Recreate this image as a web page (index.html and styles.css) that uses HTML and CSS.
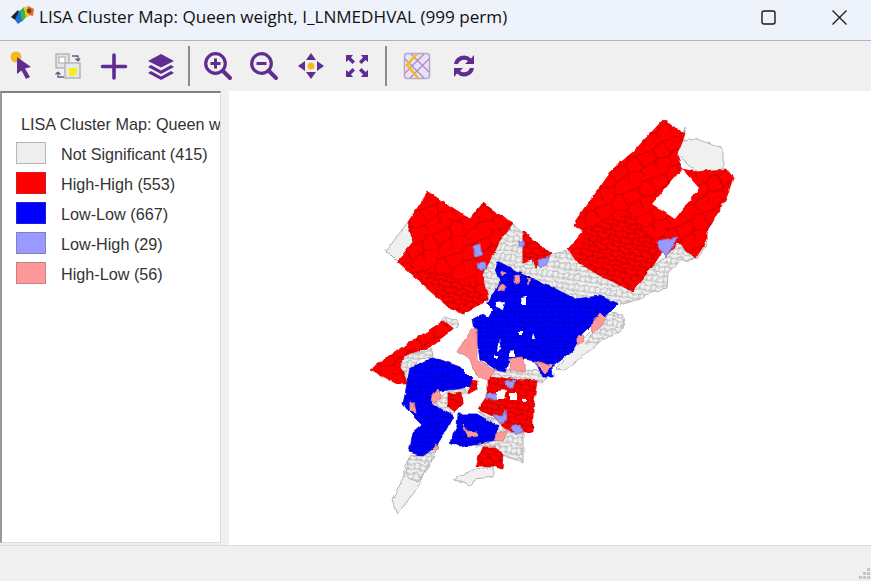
FILE: index.html
```html
<!DOCTYPE html>
<html lang="en">
<head>
    <meta charset="UTF-8">
    <meta name="viewport" content="width=device-width, initial-scale=1.0">
    <title>LISA Cluster Map</title>
    <link rel="stylesheet" href="styles.css">
</head>
<body>
    <div class="titlebar">
        <svg class="app-icon" viewBox="0 0 24 20">
            <path d="M1 12 L8 5 L10 9 L5 15Z" fill="#222"/>
            <path d="M5 15 L9 6 L13 4 L12 16 L8 19Z" fill="#1e6fe0"/>
            <path d="M10 6 L14 2 L16 12 L12 17Z" fill="#2fb84a"/>
            <path d="M14 2 L19 1 L20 10 L16 13Z" fill="#f2c21a"/>
            <path d="M18 1 L24 4 L23 11 L19 10Z" fill="#e8682a"/>
            <circle cx="19" cy="6" r="2.4" fill="#7a3a1a"/>
        </svg>
        <span class="title-text">LISA Cluster Map: Queen weight, I_LNMEDHVAL (999 perm)</span>
        <div class="win-controls">
            <svg viewBox="0 0 15 15" class="win-btn"><rect x="1" y="1" width="13" height="13" rx="2" fill="none" stroke="#1a1a1a" stroke-width="1.4"/></svg>
            <svg viewBox="0 0 15 15" class="win-btn"><path d="M.5 .5L14.5 14.5M14.5 .5L.5 14.5" stroke="#1a1a1a" stroke-width="1.3"/></svg>
        </div>
    </div>

    <div class="toolbar">
        <div class="tools">
            <svg class="tool" viewBox="0 0 30 30">
                <circle cx="10" cy="6" r="5.5" fill="#f5b921"/>
                <path d="M11 6 L25 16 L19 17.5 L24 26 L20 28 L15.5 19.5 L11 23Z" fill="#5f2d91"/>
            </svg>
            <svg class="tool" viewBox="0 0 30 30">
                <rect x="3" y="3" width="13" height="14" fill="#e4e4e4" stroke="#b5b5b5" stroke-width="1.5"/>
                <rect x="6" y="6" width="6" height="6" fill="#fff" stroke="#aaa"/>
                <rect x="12" y="12" width="15" height="15" fill="#e8e8e8" stroke="#b5b5b5" stroke-width="1.5"/>
                <path d="M16 17 H24 V22 L20 25 H16Z" fill="#f4ee1e"/>
                <path d="M19 5 H25 V10 M25 10 L22.5 7.5 M25 10 L27 7.5" fill="none" stroke="#6a5a80" stroke-width="1.3"/>
                <path d="M11 26 H5 V21 M5 21 L2.500 23.500 M5 21 L7.500 23.500" fill="none" stroke="#6a5a80" stroke-width="1.3"/>
            </svg>
            <svg class="tool" viewBox="0 0 30 30">
                <path d="M15 4 V27 M3.500 15.500 H26.500" stroke="#5f2d91" stroke-width="3.6" stroke-linecap="round"/>
            </svg>
            <svg class="tool" viewBox="0 0 30 30">
                <path d="M15 3 L28 10 L15 16.500 L2 10Z" fill="#5f2d91"/>
                <path d="M5 14 L2 16 L15 23 L28 16 L25 14 L15 19.500Z" fill="#5f2d91"/>
                <path d="M5 20 L2 22 L15 29 L28 22 L25 20 L15 25.500Z" fill="#5f2d91"/>
            </svg>
        </div>
        <div class="sep"></div>
        <div class="tools">
            <svg class="tool" viewBox="0 0 30 30">
                <circle cx="12.500" cy="12.500" r="9.800" fill="none" stroke="#5f2d91" stroke-width="3.200"/>
                <path d="M7.500 12.500 H17.500 M12.500 7.500 V17.500" stroke="#5f2d91" stroke-width="3"/>
                <path d="M20 20 L27 27" stroke="#5f2d91" stroke-width="4" stroke-linecap="round"/>
            </svg>
            <svg class="tool" viewBox="0 0 30 30">
                <circle cx="12.500" cy="12.500" r="9.800" fill="none" stroke="#5f2d91" stroke-width="3.200"/>
                <path d="M7.500 12.500 H17.500" stroke="#5f2d91" stroke-width="3"/>
                <path d="M20 20 L27 27" stroke="#5f2d91" stroke-width="4" stroke-linecap="round"/>
            </svg>
            <svg class="tool" viewBox="0 0 30 30">
                <path d="M15 2 L20 9 H10Z M15 28 L20 21 H10Z M2 15 L9 10 V20Z M28 15 L21 10 V20Z" fill="#5f2d91"/>
                <circle cx="15" cy="15" r="3.500" fill="#f5b921"/>
            </svg>
            <svg class="tool" viewBox="0 0 30 30">
                <path d="M4 4 H11 L9 6.500 L13 10.500 L10.500 13 L6.500 9 L4 11Z" fill="#5f2d91"/>
                <path d="M26 4 H19 L21 6.500 L17 10.500 L19.500 13 L23.500 9 L26 11Z" fill="#5f2d91"/>
                <path d="M4 26 H11 L9 23.500 L13 19.500 L10.500 17 L6.500 21 L4 19Z" fill="#5f2d91"/>
                <path d="M26 26 H19 L21 23.500 L17 19.500 L19.500 17 L23.500 21 L26 19Z" fill="#5f2d91"/>
            </svg>
        </div>
        <div class="sep sep-last"></div>
        <div class="tools">
            <svg class="tool" viewBox="0 0 30 30">
                <rect x="2.500" y="2.500" width="25" height="25" rx="3" fill="#e9e2f2" stroke="#b9a4d2" stroke-width="1.500"/>
                <path d="M3 22 L22 3 M8 27 L27 8 M3 8 L22 27 M9 3 L27 21" stroke="#a88cc8" stroke-width="1.300"/>
                <path d="M15 3 L5 14 L16 27" fill="none" stroke="#f5b921" stroke-width="2.600"/>
            </svg>
            <svg class="tool" viewBox="0 0 30 30">
                <path d="M5 13 A10 10 0 0 1 22 7.500 L25 4 V13 H16 L19 10 A6.500 6.500 0 0 0 9 13Z" fill="#5f2d91"/>
                <path d="M25 17 A10 10 0 0 1 8 22.500 L5 26 V17 H14 L11 20 A6.500 6.500 0 0 0 21 17Z" fill="#5f2d91"/>
            </svg>
        </div>
    </div>

    <div class="main">
        <div class="legend">
            <div class="legend-title">LISA Cluster Map: Queen w</div>
            <div class="legend-row"><span class="swatch ns"></span>Not Significant (415)</div>
            <div class="legend-row"><span class="swatch hh"></span>High-High (553)</div>
            <div class="legend-row"><span class="swatch ll"></span>Low-Low (667)</div>
            <div class="legend-row"><span class="swatch lh"></span>Low-High (29)</div>
            <div class="legend-row"><span class="swatch hl"></span>High-Low (56)</div>
        </div>
        <div class="canvas">
            <svg class="map" viewBox="229 92 642 453">
                <defs>
                    <pattern id="redBig" width="31" height="27" patternUnits="userSpaceOnUse" patternTransform="rotate(-28)">
                        <rect width="31" height="27" fill="#ff0000"/>
                        <path d="M0 6 L10 8 L17 4 L31 7 M0 19 L8 17 L20 21 L31 18 M10 8 L8 17 M20 21 L22 27 M17 4 L15 0 M23 6 L24 19 M6 18 L4 27" fill="none" stroke="#b30000" stroke-width=".8"/>
                    </pattern>
                    <pattern id="redFine" width="12" height="10" patternUnits="userSpaceOnUse" patternTransform="rotate(12)">
                        <rect width="12" height="10" fill="#ff0000"/>
                        <path d="M0 3 L6 4 L12 2 M0 8 L5 9 L12 7 M3 0 L3 4 M8 3 L9 8 M3 8 L3 10 M10 7 L10 10" fill="none" stroke="#b00000" stroke-width=".8"/>
                    </pattern>
                    <pattern id="blue" width="11" height="10" patternUnits="userSpaceOnUse">
                        <rect width="11" height="10" fill="#0000ff"/>
                        <path d="M0 3 L6 2 L11 4 M0 8 L5 8 L11 9 M3 2 L3 8 M8 3 L8 9" fill="none" stroke="#0000b0" stroke-width=".8"/>
                    </pattern>
                    <pattern id="gray" width="11" height="10" patternUnits="userSpaceOnUse" patternTransform="rotate(8)">
                        <rect width="11" height="10" fill="#f0f0f0"/>
                        <path d="M0 3 L6 2 L11 4 M0 8 L5 8 L11 9 M3 2 L3 8 M8 3 L8 9 M3 8 L3 10 M6 0 L6 2" fill="none" stroke="#b4b4b4" stroke-width="1"/>
                    </pattern>
                    <filter id="rough" x="-5%" y="-5%" width="110%" height="110%">
                        <feTurbulence type="fractalNoise" baseFrequency=".13" numOctaves="2" seed="4"/>
                        <feDisplacementMap in="SourceGraphic" scale="4" xChannelSelector="R" yChannelSelector="G"/>
                    </filter>
                </defs>
                <g filter="url(#rough)">
                    <!-- not significant, large plain tracts -->
                    <g class="ns-plain">
                        <polygon points="408,223 386,252 397,263 413,243"/>
                        <polygon points="685,128 683,142 697,140 715,147 723,148 723,170 703,172 697,173 677,155"/>
                        <polygon points="620,315 610,313 580,343 573,352 555,370 565,371 600,343 622,320"/>
                        <polygon points="410,457 435,453 430,467 420,480 417,490 397,515 392,500 403,480 405,467"/>
                        <polygon points="493,468 475,470 453,480 470,487 475,480 493,478"/>
                        <polygon points="678,245 697,260 707,245 690,250 668,270 655,270"/>
                    </g>
                    <!-- not significant, dense tracts -->
                    <g class="ns-dense">
                        <polygon points="513,225 523,233 523,263 532,260 535,269 552,255 567,252 577,263 593,273 632,292 653,267 663,260 678,245 697,260 680,262 668,275 667,290 650,293 640,300 617,307 600,297 575,300 550,287 533,280 517,273 507,267 497,262 495,270 500,283 495,292 487,305 480,277 498,245"/>
                        <polygon points="445,318 458,322 457,328 447,332 440,326"/>
                        <polygon points="432,350 403,357 400,368 408,385 412,370 420,360 433,358"/>
                        <polygon points="477,412 503,425 523,435 523,463 503,457 493,447 475,447 497,440 498,427"/>
                        <polygon points="437,398 462,388 468,387 470,393 462,395 463,405 455,413 448,417 440,410 433,402"/>
                        <polygon points="493,370 552,372 543,383 487,383"/>
                        <polygon points="610,313 622,315 625,328 600,343 585,345"/>
                        <polygon points="410,457 435,453 428,468 417,482 405,478"/>
                    </g>
                    <g class="hh-big">
                        <polygon points="428,193 470,220 483,204 513,225 498,245 482,277 488,300 463,315 447,307 397,263 413,243 408,223"/>
                        <polygon points="663,121 685,135 677,155 682,170 697,173 703,172 727,170 733,179 727,197 707,233 707,242 695,260 678,243 665,258 657,243 662,253 653,267 632,292 593,273 577,263 568,250 583,233 574,225 613,170 633,153"/>
                        <polygon points="370,370 443,322 453,330 430,348 403,357 400,368 408,385 397,385"/>
                    </g>
                    <g class="hh-fine">
                        <polygon points="523,233 552,255 535,269 532,260 523,263"/>
                        <polygon points="487,378 537,382 533,410 533,433 510,433 492,417 478,410 487,397"/>
                        <polygon points="483,448 497,448 503,457 502,470 493,467 475,467"/>
                        <polygon points="448,395 462,393 463,405 455,413 448,407"/>
                        <polygon points="470,381 477,382 477,390 468,395 469,390"/>
                        <polygon class="inner" points="587,230 630,213 657,243 653,267 632,292 593,273 577,260"/>
                        <polygon class="inner" points="420,270 470,283 487,300 463,315 447,307"/>
                    </g>
                    <g class="ll">
                        <polygon points="497,262 507,267 517,273 533,280 550,287 575,300 600,297 618,305 610,313 590,327 580,337 573,352 552,368 553,378 543,378 535,362 523,360 510,360 505,372 495,370 480,360 475,330 473,320 492,310 487,305 495,292 500,283 495,270"/>
                        <polygon points="458,415 477,415 498,427 497,440 480,445 460,448 450,443 457,427"/>
                        <polygon points="410,370 433,358 460,368 472,380 470,387 457,390 440,392 432,398 433,405 440,410 453,417 443,437 437,447 423,457 409,453 413,433 422,425 407,410 403,405"/>
                    </g>
                    <g class="hl">
                        <polygon points="472,330 477,330 477,360 495,372 487,382 475,375 470,360 457,353"/>
                        <polygon points="509,360 522,358 526,372 510,372"/>
                        <polygon points="590,327 600,314 606,320 594,335"/>
                        <polygon points="578,337 584,335 583,343 578,346"/>
                        <polygon points="535,362 552,367 545,374"/>
                        <polygon points="431,400 438,390 441,397 436,405"/>
                        <polygon points="410,403 414,403 416,414 410,412"/>
                        <polygon points="463,426 467,432 478,433 478,437 468,438"/>
                        <polygon points="496,436 507,430 503,442 494,443"/>
                        <polygon points="435,445 438,447 436,453 432,450"/>
                        <polygon points="502,272 506,274 502,278"/>
                        <polygon points="514,277 519,276 520,283 514,284"/>
                        <polygon points="499,287 503,285 505,290 498,292"/>
                        <polygon points="527,280 530,281 528,286"/>
                    </g>
                    <g class="lh">
                        <polygon points="657,242 678,238 665,259"/>
                        <polygon points="473,247 480,245 482,256 476,258"/>
                        <polygon points="477,264 484,263 486,270 478,270"/>
                        <polygon points="519,242 524,242 524,247 519,247"/>
                        <polygon points="538,261 549,258 547,266 539,268"/>
                        <polygon points="486,395 497,395 497,400 486,400"/>
                        <polygon points="492,417 503,417 506,411 507,421 500,424"/>
                        <polygon points="511,428 520,426 523,432 515,436"/>
                        <polygon points="505,382 515,381 513,388 506,388"/>
                    </g>
                    <!-- gaps in the layer -->
                    <g class="holes">
                        <polygon points="682,170 699,189 675,220 652,205"/>
                        <polygon points="487,307 492,311 488,318 482,314"/>
                        <polygon points="497,303 505,302 503,310 495,308"/>
                        <polygon points="521,299 527,298 527,306 522,306"/>
                        <polygon points="496,392 507,391 505,400 497,400"/>
                        <polygon points="510,394 517,394 517,401 510,401"/>
                        <polygon points="522,400 526,400 526,403 522,403"/>
                        <polygon points="499,339 501,351 497,353"/>
                        <polygon points="494,357 498,357 498,360 494,360"/>
                        <polygon points="518,333 522,333 522,337 518,337"/>
                        <polygon points="533,335 535,340 532,340"/>
                        <polygon points="509,352 514,351 514,358 509,358"/>
                    </g>
                </g>
            </svg>
        </div>
    </div>

    <div class="statusbar">
        <svg class="grip" viewBox="0 0 12 12">
            <path d="M8 0h3v3h-3z M4 4h3v3h-3z M8 4h3v3h-3z M0 8h3v3h-3z M4 8h3v3h-3z M8 8h3v3h-3z" fill="#c4c4c4"/>
        </svg>
    </div>
</body>
</html>
```

FILE: styles.css
```css
html, body {
    height: 100%;
}
body {
    margin: 0;
    display: flex;
    flex-direction: column;
    background-color: #f0f0f0;
    overflow: hidden;
}
.titlebar {
    height: 40px;
    display: flex;
    align-items: center;
    background-color: #eef2fa;
    border-bottom: 1px solid #b4b4b4;
    flex-shrink: 0;
}
.app-icon {
    width: 24px;
    height: 20px;
    margin-left: 10px;
    margin-top: -10px;
}
.title-text {
    margin-left: 5px;
    margin-top: -7px;
    font-family: "Open Sans", sans-serif;
    font-size: 17.1px;
    color: #111;
    white-space: nowrap;
}
.win-controls {
    margin-left: auto;
    display: flex;
    gap: 56px;
    margin-right: 24px;
}
.win-btn {
    width: 15px;
    height: 15px;
    margin-top: -6px;
}
.toolbar {
    height: 50px;
    display: flex;
    align-items: center;
    padding-left: 6px;
    flex-shrink: 0;
}
.tools {
    display: flex;
    gap: 16.5px;
}
.tool {
    width: 30px;
    height: 30px;
}
.sep {
    width: 2px;
    height: 40px;
    background-color: #8c8c8c;
    margin: 0 13px 0 12px;
}
.sep-last {
    margin: 0 15px 0 13px;
}
.main {
    flex: 1;
    display: flex;
    min-height: 0;
}
.legend {
    width: 218px;
    margin-right: 8px;
    margin-bottom: 2px;
    background-color: #fff;
    border-top: 2px solid #828282;
    border-left: 2px solid #9a9a9a;
    border-right: 1px solid #dcdcdc;
    border-bottom: 1px solid #dcdcdc;
    overflow: hidden;
    font-family: "Liberation Sans", Arial, sans-serif;
    font-size: 16.2px;
    color: #333;
}
.legend-title {
    margin: 22px 0 0 19px;
    white-space: nowrap;
    line-height: 18px;
}
.legend-row {
    display: flex;
    align-items: center;
    height: 30px;
    padding-left: 14px;
    white-space: nowrap;
}
.legend-title + .legend-row {
    margin-top: 6px;
}
.swatch {
    width: 28px;
    height: 20px;
    margin-right: 15px;
    margin-bottom: 2px;
    border: 1px solid;
    flex-shrink: 0;
}
.swatch.ns { background-color: #eeeeee; border-color: #b5b5b5; }
.swatch.hh { background-color: #ff0000; border-color: #d02020; }
.swatch.ll { background-color: #0000ff; border-color: #2020d0; }
.swatch.lh { background-color: #9999ff; border-color: #7f7fc8; }
.swatch.hl { background-color: #ff9999; border-color: #c88080; }
.canvas {
    flex: 1;
    background-color: #fff;
    min-width: 0;
}
.map {
    display: block;
    width: 642px;
    height: 453px;
}
.ns-plain polygon { fill: #f0f0f0; stroke: #b4b4b4; stroke-width: 1; }
.ns-dense polygon { fill: url(#gray); stroke: #b4b4b4; stroke-width: 1; }
.hh-big polygon { fill: url(#redBig); stroke: #e00000; stroke-width: .8; }
.hh-fine polygon { fill: url(#redFine); stroke: #e00000; stroke-width: .8; }
.hh-fine polygon.inner { stroke: none; }
.ll polygon { fill: url(#blue); stroke: #0000e0; stroke-width: .8; }
.hl polygon { fill: #ff9999; stroke: #d88888; stroke-width: 1; }
.lh polygon { fill: #9999ff; stroke: #7f7fd0; stroke-width: 1; }
.holes polygon { fill: #fff; }
.statusbar {
    height: 35px;
    border-top: 1px solid #dcdcdc;
    display: flex;
    justify-content: flex-end;
    align-items: flex-end;
    flex-shrink: 0;
}
.grip {
    width: 12px;
    height: 12px;
    margin-bottom: 1px;
}
```
